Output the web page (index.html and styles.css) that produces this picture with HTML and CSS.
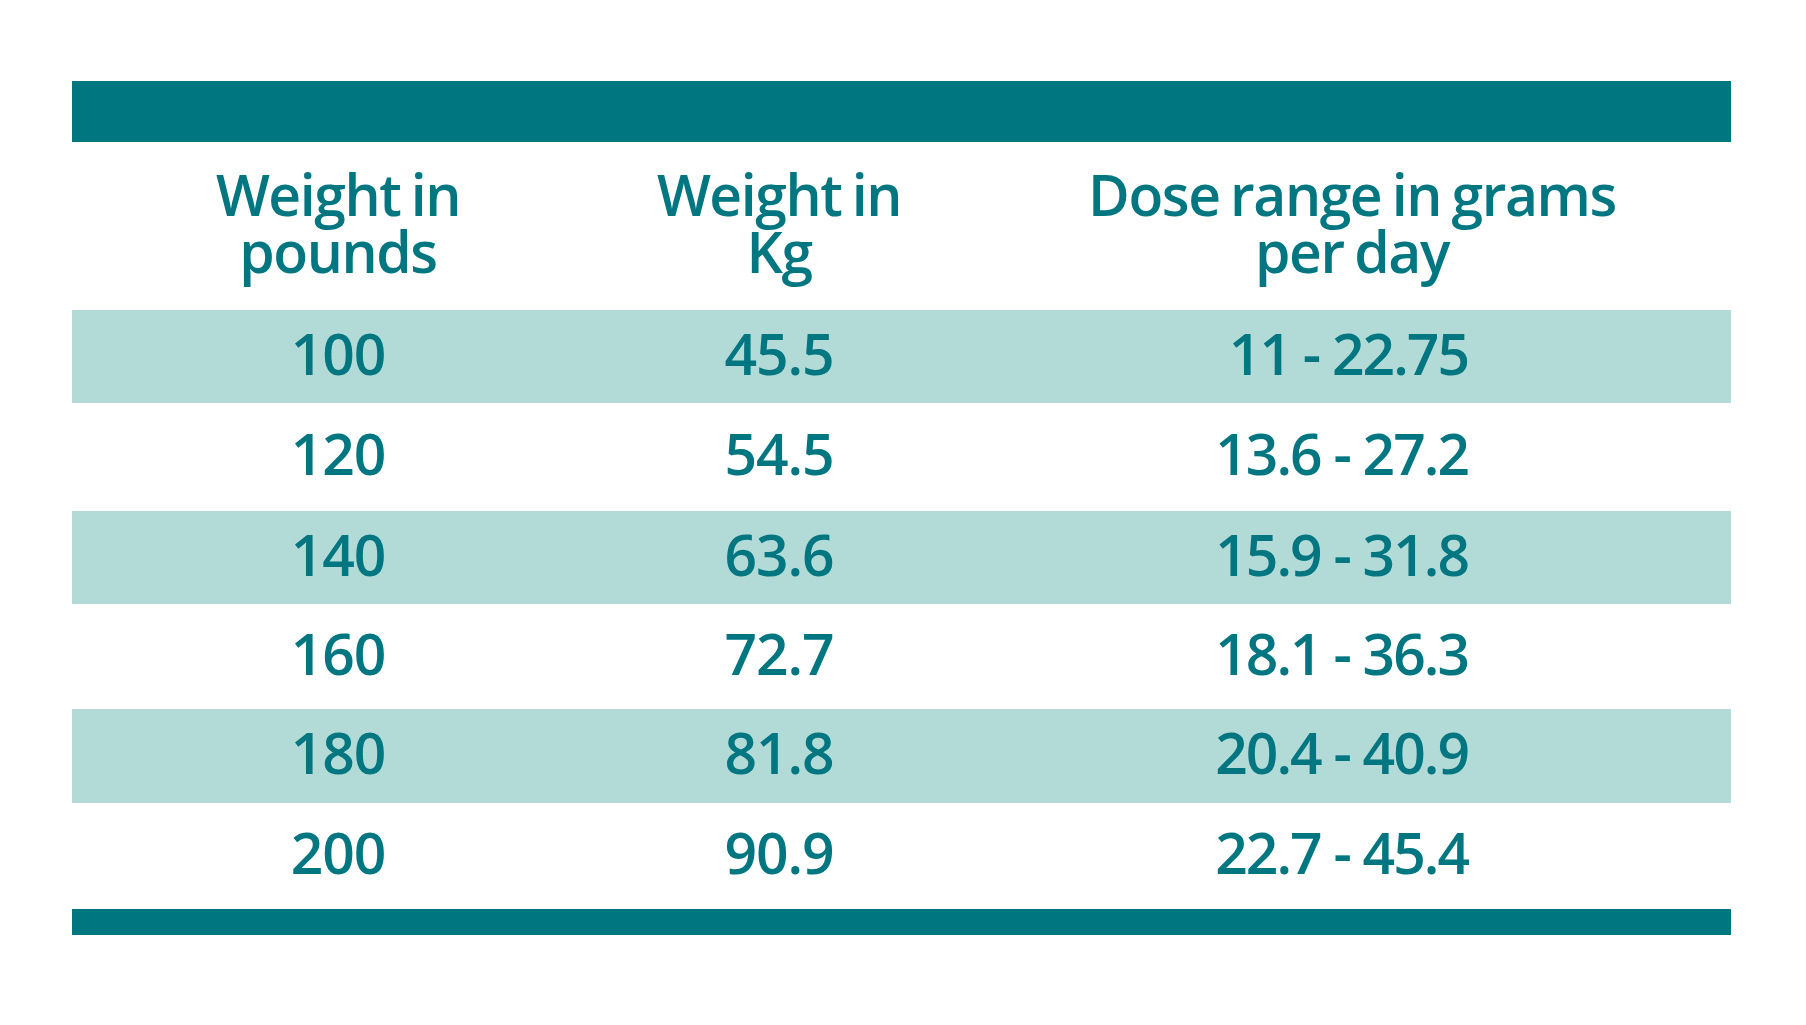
FILE: index.html
```html
<!DOCTYPE html>
<html lang="en">
<head>
<meta charset="utf-8">
<title>Dose table</title>
<link rel="stylesheet" href="styles.css">
</head>
<body>
<div class="page">
  <div class="table">
    <div class="bar bar-top"></div>
    <div class="row head">
      <div class="cell c1">Weight in<br>pounds</div>
      <div class="cell c2">Weight in<br>Kg</div>
      <div class="cell c3">Dose range in grams<br>per day</div>
    </div>
    <div class="row data shade r1">
      <div class="cell c1">100</div>
      <div class="cell c2">45.5</div>
      <div class="cell c3">11 - 22.75</div>
    </div>
    <div class="row data r2">
      <div class="cell c1">120</div>
      <div class="cell c2">54.5</div>
      <div class="cell c3">13.6 - 27.2</div>
    </div>
    <div class="row data shade r3">
      <div class="cell c1">140</div>
      <div class="cell c2">63.6</div>
      <div class="cell c3">15.9 - 31.8</div>
    </div>
    <div class="row data r4">
      <div class="cell c1">160</div>
      <div class="cell c2">72.7</div>
      <div class="cell c3">18.1 - 36.3</div>
    </div>
    <div class="row data shade r5">
      <div class="cell c1">180</div>
      <div class="cell c2">81.8</div>
      <div class="cell c3">20.4 - 40.9</div>
    </div>
    <div class="row data r6">
      <div class="cell c1">200</div>
      <div class="cell c2">90.9</div>
      <div class="cell c3">22.7 - 45.4</div>
    </div>
    <div class="bar bar-bottom"></div>
  </div>
</div>
</body>
</html>
```
FILE: styles.css
```css
html, body {
  margin: 0;
  padding: 0;
  background: #ffffff;
}

.page {
  padding: 81px 75px 0 72px;
}

.table {
  width: 1659px;
  font-family: "Open Sans", "Noto Sans", sans-serif;
  font-weight: 600;
  color: #007681;
}

.bar {
  background: #007681;
}

.bar-top {
  height: 61px;
}

.bar-bottom {
  height: 26px;
}

.row {
  display: grid;
  grid-template-columns: 532px 350px 1fr;
  align-items: center;
}

.cell {
  text-align: center;
}

.head {
  height: 168px;
  font-size: 57px;
  line-height: 57px;
  letter-spacing: -0.025em;
  word-spacing: -0.05em;
  padding-bottom: 6px;
  box-sizing: border-box;
}

.head .c3 {
  padding-left: 19px;
}

.data {
  font-size: 57px;
  line-height: 60px;
  letter-spacing: -0.02em;
  box-sizing: border-box;
  padding-bottom: 8px;
}

.data .c3 {
  text-align: right;
  padding-right: 263px;
  letter-spacing: -0.035em;
}

.shade {
  background: #b2dbd7;
}

.r1 { height: 93px; }
.r2 { height: 108px; }
.r3 { height: 93px; }
.r4 { height: 105px; }
.r5 { height: 94px; }
.r6 { height: 106px; }
```
